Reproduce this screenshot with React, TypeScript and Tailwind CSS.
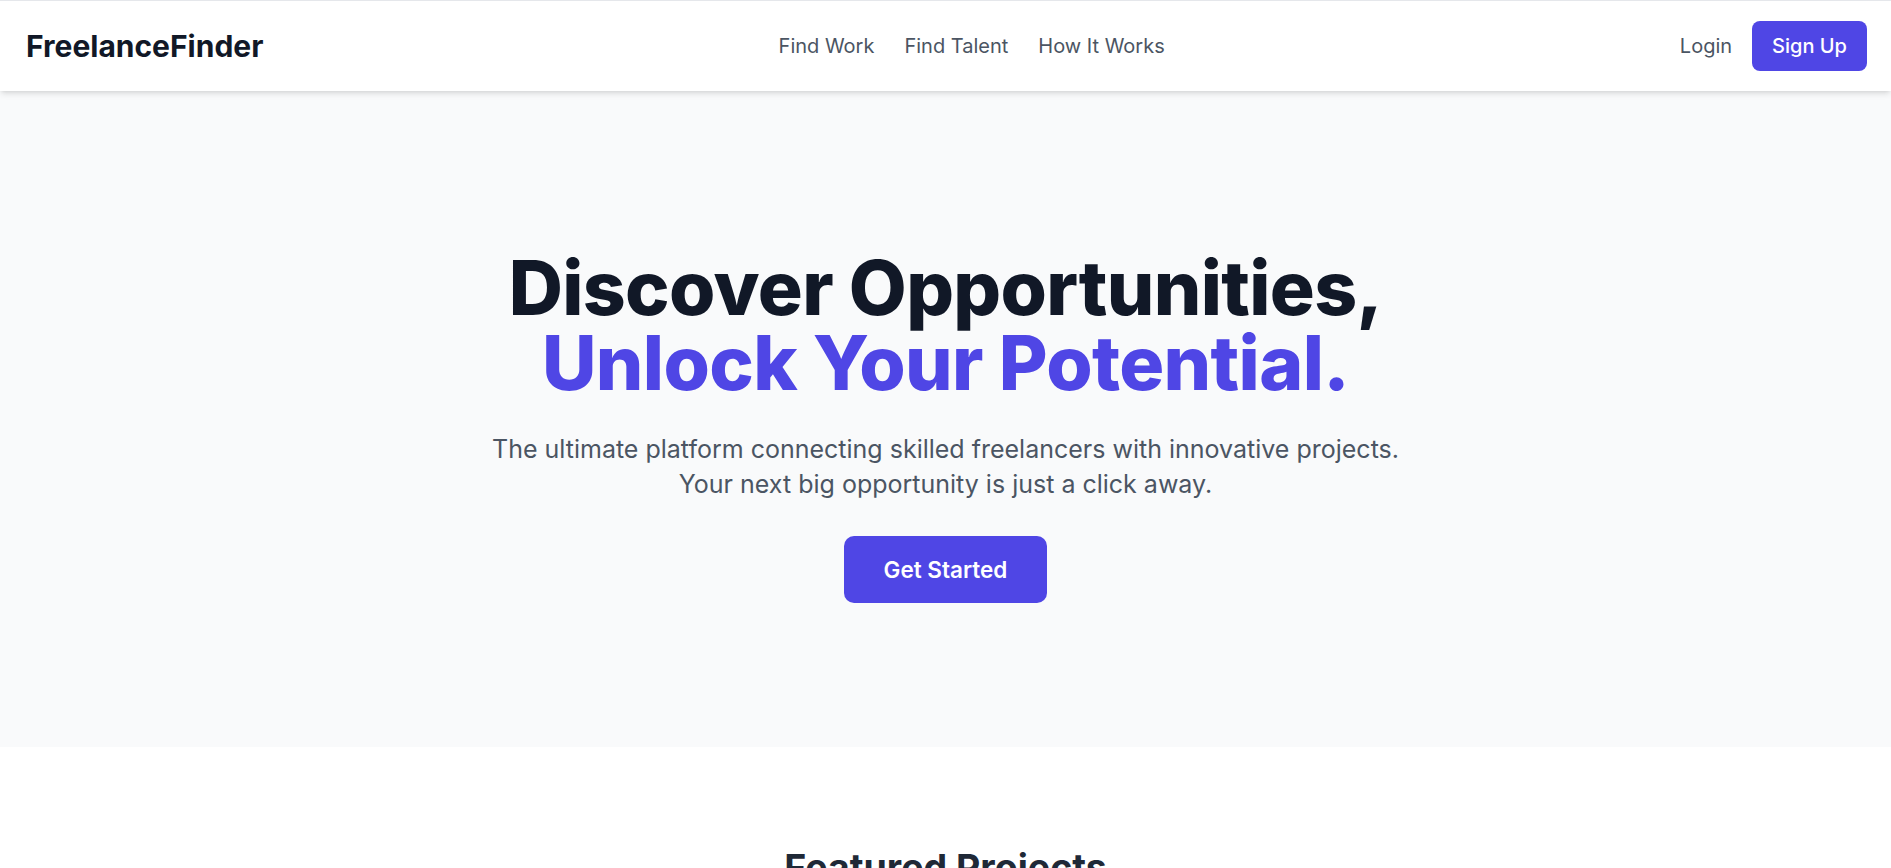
import React from "react";

export default function App() {
  return (
    <div className="min-h-screen bg-white" style={{ fontFamily: "Inter, 'Noto Sans', sans-serif" }}>
      <header className="relative z-10 border-t border-gray-200 bg-white shadow-md">
        <div className="flex h-[90px] items-center justify-between pl-[26px] pr-[24px]">
          <div className="text-[30px] font-bold leading-[36px] text-[#111827]">FreelanceFinder</div>
          <nav className="flex items-center gap-[30px] text-[20px] leading-[30px] text-[#4b5563]">
            <a className="cursor-pointer">Find Work</a>
            <a className="cursor-pointer">Find Talent</a>
            <a className="cursor-pointer">How It Works</a>
          </nav>
          <div className="flex items-center gap-[20px] text-[20px] leading-[30px]">
            <a className="cursor-pointer text-[#4b5563]">Login</a>
            <button className="rounded-[8px] bg-[#4f46e5] px-[20px] py-[10px] text-[20px] font-medium leading-[30px] text-white">
              Sign Up
            </button>
          </div>
        </div>
      </header>

      <section className="bg-[#f9fafb] pt-[159px] pb-[144px]">
        <div className="flex flex-col items-center text-center">
          <h1 className="text-[75px] font-extrabold leading-[75px] tracking-[-0.65px] text-[#111827]">
            <span className="block">Discover Opportunities,</span>
            <span className="block text-[#4f46e5]">Unlock Your Potential.</span>
          </h1>
          <p className="mt-[32px] text-[25px] leading-[35px] text-[#4b5563]">
            <span className="block">The ultimate platform connecting skilled freelancers with innovative projects.</span>
            <span className="block">Your next big opportunity is just a click away.</span>
          </p>
          <button className="mt-[34px] rounded-[10px] bg-[#4f46e5] px-[40px] py-[16px] text-[22.5px] font-semibold leading-[35px] text-white">
            Get Started
          </button>
        </div>
      </section>

      <section className="bg-white pt-[98px] pb-[100px]">
        <h2 className="text-center text-[37.5px] font-bold leading-[45px] text-[#1f2937]">Featured Projects</h2>
        <div className="mx-auto mt-[50px] grid max-w-[1500px] grid-cols-3 gap-[30px] px-[25px]">
          {["Website Redesign", "Mobile App Development", "Brand Identity"].map((t) => (
            <div key={t} className="rounded-[10px] border border-gray-200 bg-white p-[30px] shadow-sm">
              <div className="text-[22px] font-semibold text-[#111827]">{t}</div>
              <div className="mt-2 text-[18px] text-[#4b5563]">Project description goes here.</div>
            </div>
          ))}
        </div>
      </section>
    </div>
  );
}
